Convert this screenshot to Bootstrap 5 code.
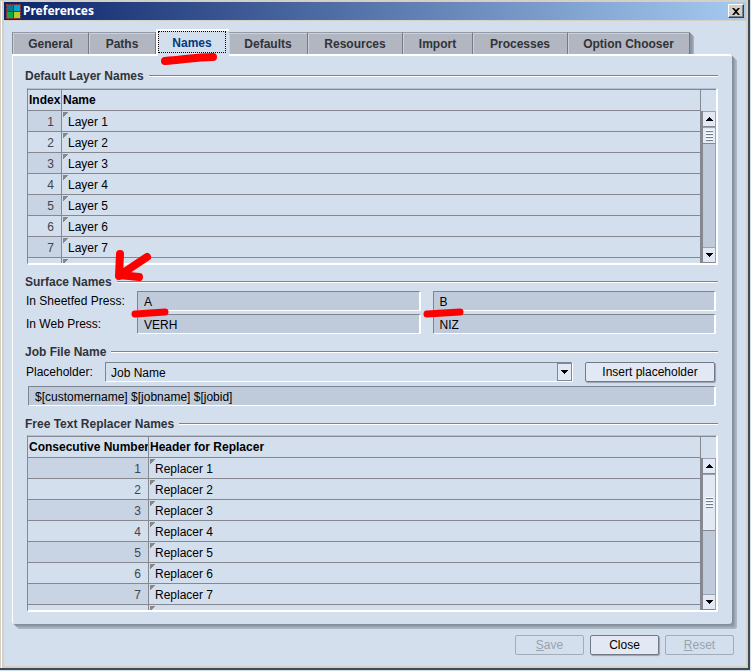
<!DOCTYPE html>
<html lang="en">
<head>
<meta charset="utf-8">
<meta name="viewport" content="width=device-width, initial-scale=1">
<title>Preferences</title>
<link href="https://cdn.jsdelivr.net/npm/bootstrap@5.3.0/dist/css/bootstrap.min.css" rel="stylesheet">
<style>
:root{--face:#d4dfee;--line:#858891;--well:#bfcadb;--btn:#e2e8f4;--frame:#d4d0c8}
body{background:var(--face);font:12px/16px "Liberation Sans",Arial,sans-serif;color:#000}
button,input,select{font:inherit;color:inherit}
.win-edge{border-right:2px solid #404850;border-bottom:2px solid #404850;margin:0 1px 1px 0;position:relative}
.win-edge::before{content:"";position:absolute;left:1px;top:1px;bottom:0;width:1px;background:#fff}
.win{background:var(--face);border:solid var(--frame);border-width:2px 2px 2px 4px;padding-bottom:11px}
.titlebar{height:19px;background:linear-gradient(90deg,#0a246a,#a6caf0);border-bottom:1px solid var(--frame);color:#fff;padding:0 2px;gap:2px}
.titlebar h1{font:bold 12px/16px "Noto Sans",Tahoma,sans-serif;margin:0}
.close-x{width:16px;height:14px;background:var(--frame);border:1px solid;border-color:#fff #404040 #404040 #fff;box-shadow:inset -1px -1px #808080;padding:0}
.tabs{padding:8px 0 0 8px;border:0}
.tabs .tab{height:22px;border:solid;border-width:1px 1px 0 0;border-color:#929aa9 #747982 #747982;background:#b2b6c0;box-shadow:inset 1px 1px #cbd1dc;color:#303338;font-weight:bold;padding:0;text-align:center}
.tabs .tab:first-child{border-left:1px solid #858c98}
.tabs .tab.active{height:27px;margin-bottom:-2px;padding:1px 2px 3px 0;background:var(--face);border:0;box-shadow:inset 2px 2px #fff;color:#003a80;position:relative;z-index:1}
.tab.active .dots{display:block;border:1px dotted #000;margin:1px 1px 0 2px;height:22px;line-height:22px}
.tabs .tab:last-child{box-shadow:inset 1px 1px #cbd1dc,1px 1px #8b95a2,2px 2px #8f99a6,3px 3px #98a3b1,4px 4px #a7b2c1;clip-path:inset(0 -5px 0 0)}
.w67{width:67px}.w73{width:73px}.w77{width:77px}.w79{width:79px}.w95{width:95px}.w70{width:70px}.w122{width:122px}
.panel{margin:0 14px 0 8px;padding:12px 14px 12px 12px;border:solid #fff;border-width:2px 0 0 1px;border-radius:0 3px 3px 3px;background:var(--face);
 box-shadow:1px 1px #858f9c,2px 2px #8c96a3,3px 3px #98a2b0,4px 4px #a5b0be,5px 5px #abb6c4}
.panel h2{font:bold 12px/16px "Liberation Sans",Arial,sans-serif;color:#303338;margin:0;gap:5px;position:relative}
.panel h2::after{content:"";flex:1;height:2px;margin-bottom:1px;background:linear-gradient(#7f828a 50%,#fff 50%)}
.section+.section{margin-top:9px}
.section+.section.wide{margin-top:10px}
.lister{margin:4px 0 0 2px;border:solid;border-width:1px 2px 2px 1px;border-color:#b6c0d2 #fff #fff var(--line);height:177px;overflow:hidden}
.lister.tight{margin-top:3px}
.grid{border-collapse:separate;border-spacing:0;border-top:1px solid var(--line);margin:0;table-layout:fixed;width:100%}
.grid th,.grid td{height:21px;padding:2px 0 0;line-height:16px;border-right:1px solid var(--line);border-bottom:1px solid var(--line);white-space:nowrap;overflow:hidden}
.grid th{padding:0 0 0 1px;font-weight:bold}
.grid td:first-child{text-align:right;padding-right:7px;color:#40454d}
.grid tbody tr:nth-child(odd) td:first-child{background:#c8d3e4}
.grid td:last-child{padding-left:6px;background:linear-gradient(135deg,#85888b 4px,transparent 4px) 1px 1px/6px 6px no-repeat}
.c-index{width:34px}.c-num{width:121px}
.scroller{flex:0 0 15px;border-top:1px solid var(--line);padding-top:21px}
.track{background:var(--well);border-left:2px solid var(--line);border-right:1px solid #9aa3b1}
.track button{border:0;border-bottom:1px solid var(--line);border-top:1px solid #9aa3b1;background:var(--btn);padding:0;height:16px;width:100%}
.track .thumb{height:17px}
.track .thumb.long{height:57px}
.grip{width:7px;height:11px;background:repeating-linear-gradient(#fff 0 1px,#747b88 1px 2px,transparent 2px 3px)}
.well{height:20px;border:solid;border-width:1px 2px 1px 1px;border-color:#7d8592 #fff #fff #7d8592;background:var(--well);padding:1px 5px 0 6px;border-radius:1px;width:100%;display:block;outline:0}
.names{display:grid;grid-template-columns:111px 1fr 1fr;row-gap:3px;padding:1px 2px 0 1px}
.names>div{position:relative}
.names .left-field{margin-right:6px}.names .right-field{margin-left:6px}
.names label{line-height:20px}
.job{padding-top:2px}
.hold{width:80px;padding-left:1px;line-height:20px}
.insert{width:130px;margin-right:3px}
.pattern{padding:4px 2px 0 3px}
.pick{position:relative;margin-right:12px}
.pick select{appearance:none;background:var(--face);padding-left:5px}
.pick .drop{position:absolute;right:1px;top:1px;width:15px;height:18px;background:var(--btn);border:1px solid var(--line);pointer-events:none}
.push{height:20px;background:var(--btn);border:1px solid #727985;border-radius:2px;padding:0;box-shadow:1px 1px 1px #98a2b0;line-height:18px}
.push:disabled{background:transparent;border-color:#a2adbc;color:#98a2b0;box-shadow:none}
.foot{margin:11px 12px 0;gap:6px}
.foot .push{width:69px}
.mark-red{position:absolute;pointer-events:none;fill:none;stroke:#f00;stroke-linecap:round;stroke-linejoin:round;overflow:visible;z-index:3}
.m-tab{left:6px;top:23px}.m-arrow{left:88px;top:-22px}.m-field{left:-4px;top:16px}
</style>
</head>
<body>
<div class="win-edge">
<main class="win">
 <header class="titlebar d-flex align-items-center">
  <svg width="15" height="15" viewBox="0 0 15 15" aria-hidden="true"><path fill="#722c20" d="M1 1h13v13H1z"/><path fill="#087c88" d="M1 1h6v6H1z"/><path fill="#00a5d0" d="M8 1h6v6H8z"/><path fill="#10a84c" d="M1 8h6v6H1z"/><path fill="#b4cf28" d="M8 8h6v6H8z"/><path stroke="#b23a28" stroke-dasharray="2 1" fill="none" d="M.5 .5h14v14H.5z"/></svg>
  <h1>Preferences</h1>
  <button class="close-x ms-auto d-flex align-items-center justify-content-center" aria-label="Close window"><svg width="8" height="7" viewBox="0 0 8 7"><path d="M0 0h2l2 2 2-2h2L5 3.500 8 7H6L4 5 2 7H0l3-3.500z"/></svg></button>
 </header>
 <nav class="tabs nav align-items-end flex-nowrap" role="tablist">
  <button class="tab w77" role="tab">General</button>
  <button class="tab w67" role="tab">Paths</button>
  <button class="tab active w73" role="tab" aria-selected="true"><span class="dots">Names</span><svg class="mark-red m-tab" width="56" height="12" viewBox="0 0 56 12"><path stroke-width="8" d="M3 9C20 8 34 5 51 5"/></svg></button>
  <button class="tab w79" role="tab">Defaults</button>
  <button class="tab w95" role="tab">Resources</button>
  <button class="tab w70" role="tab">Import</button>
  <button class="tab w95" role="tab">Processes</button>
  <button class="tab w122" role="tab">Option Chooser</button>
 </nav>
 <div class="panel">
  <section class="section">
   <h2 class="d-flex align-items-center">Default Layer Names</h2>
   <div class="lister d-flex">
    <div class="flex-grow-1">
     <table class="grid"><thead><tr><th class="c-index">Index</th><th>Name</th></tr></thead><tbody>
      <tr><td>1</td><td>Layer 1</td></tr><tr><td>2</td><td>Layer 2</td></tr><tr><td>3</td><td>Layer 3</td></tr><tr><td>4</td><td>Layer 4</td></tr><tr><td>5</td><td>Layer 5</td></tr><tr><td>6</td><td>Layer 6</td></tr><tr><td>7</td><td>Layer 7</td></tr><tr><td></td><td></td></tr>
     </tbody></table>
    </div>
    <div class="scroller d-flex flex-column"><div class="track d-flex flex-column flex-grow-1">
     <button aria-label="Scroll up" class="d-flex align-items-center justify-content-center"><svg width="7" height="4" shape-rendering="crispEdges"><path d="M3 0h1v1h1v1h1v1h1v1H0V3h1V2h1V1h1z"/></svg></button>
     <div class="d-flex flex-column flex-grow-1"><button aria-label="Scroll position" class="thumb d-flex align-items-center justify-content-center"><span class="grip"></span></button></div>
     <button aria-label="Scroll down" class="d-flex align-items-center justify-content-center"><svg width="7" height="4" shape-rendering="crispEdges"><path d="M0 0h7v1H6v1H5v1H4v1H3V3H2V2H1V1H0z"/></svg></button>
    </div></div>
   </div>
  </section>
  <section class="section">
   <h2 class="d-flex align-items-center">Surface Names<svg class="mark-red m-arrow" width="40" height="32" viewBox="0 0 40 32"><path stroke-width="8" d="M7 2L6 24M34 5L7 23M6 23L26 25"/></svg></h2>
   <div class="names">
    <label for="sheetA">In Sheetfed Press:</label>
    <div class="left-field"><input class="well" id="sheetA" value="A" readonly><svg class="mark-red m-field" width="40" height="11" viewBox="0 0 40 11"><path stroke-width="7" d="M2 7L32 5"/></svg></div>
    <div class="right-field"><input class="well" aria-label="Sheetfed press, back" value="B" readonly><svg class="mark-red m-field" width="40" height="11" viewBox="0 0 40 11"><path stroke-width="7" d="M-2 7L31 5"/></svg></div>
    <label for="webA">In Web Press:</label>
    <div class="left-field"><input class="well" id="webA" value="VERH" readonly></div>
    <div class="right-field"><input class="well" aria-label="Web press, back" value="NIZ" readonly></div>
   </div>
  </section>
  <section class="section wide">
   <h2 class="d-flex align-items-center">Job File Name</h2>
   <div class="d-flex align-items-start job">
    <label class="hold" for="hold">Placeholder:</label>
    <div class="pick flex-grow-1"><select class="well" id="hold"><option>Job Name</option></select><span class="drop d-flex align-items-center justify-content-center"><svg width="7" height="4" shape-rendering="crispEdges"><path d="M0 0h7v1H6v1H5v1H4v1H3V3H2V2H1V1H0z"/></svg></span></div>
    <button class="push insert">Insert placeholder</button>
   </div>
   <div class="pattern"><input class="well" aria-label="File name pattern" value="$[customername] $[jobname] $[jobid]" readonly></div>
  </section>
  <section class="section wide">
   <h2 class="d-flex align-items-center">Free Text Replacer Names</h2>
   <div class="lister tight d-flex">
    <div class="flex-grow-1">
     <table class="grid"><thead><tr><th class="c-num">Consecutive Number</th><th>Header for Replacer</th></tr></thead><tbody>
      <tr><td>1</td><td>Replacer 1</td></tr><tr><td>2</td><td>Replacer 2</td></tr><tr><td>3</td><td>Replacer 3</td></tr><tr><td>4</td><td>Replacer 4</td></tr><tr><td>5</td><td>Replacer 5</td></tr><tr><td>6</td><td>Replacer 6</td></tr><tr><td>7</td><td>Replacer 7</td></tr><tr><td></td><td></td></tr>
     </tbody></table>
    </div>
    <div class="scroller d-flex flex-column"><div class="track d-flex flex-column flex-grow-1">
     <button aria-label="Scroll up" class="d-flex align-items-center justify-content-center"><svg width="7" height="4" shape-rendering="crispEdges"><path d="M3 0h1v1h1v1h1v1h1v1H0V3h1V2h1V1h1z"/></svg></button>
     <div class="d-flex flex-column flex-grow-1"><button aria-label="Scroll position" class="thumb long d-flex align-items-center justify-content-center"><span class="grip"></span></button></div>
     <button aria-label="Scroll down" class="d-flex align-items-center justify-content-center"><svg width="7" height="4" shape-rendering="crispEdges"><path d="M0 0h7v1H6v1H5v1H4v1H3V3H2V2H1V1H0z"/></svg></button>
    </div></div>
   </div>
  </section>
 </div>
 <footer class="foot d-flex justify-content-end">
  <button class="push" disabled><u>S</u>ave</button>
  <button class="push">Close</button>
  <button class="push" disabled><u>R</u>eset</button>
 </footer>
</main>
</div>
<script src="https://cdn.jsdelivr.net/npm/bootstrap@5.3.0/dist/js/bootstrap.bundle.min.js"></script>
</body>
</html>
